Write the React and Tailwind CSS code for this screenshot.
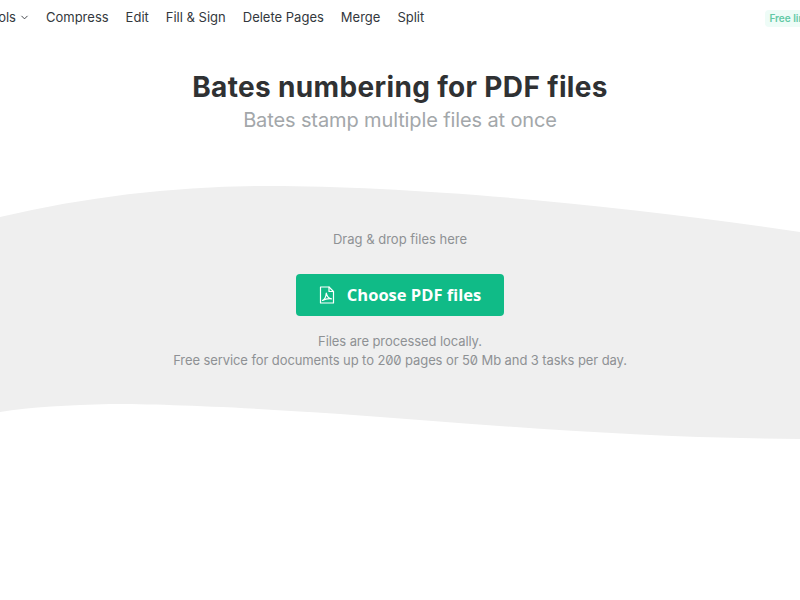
import React from 'react';
import { ChevronDown } from 'lucide-react';

const links = ['Compress', 'Edit', 'Fill & Sign', 'Delete Pages', 'Merge', 'Split'];

const Nav = () => (
  <nav className="flex h-[36px] items-center justify-between overflow-hidden">
    <div className="flex items-center text-[13px] text-[#33383d] -ml-[17px]">
      <span className="flex items-center">
        Tools
        <ChevronDown size={11} className="ml-[3px] -mt-[2px]" />
      </span>
      <div className="ml-[16px] flex gap-[17px]">
        {links.map((link) => (
          <span key={link}>{link}</span>
        ))}
      </div>
    </div>
    <span className="-mr-[23px] rounded bg-[#eefcf7] px-[4px] py-[1px] text-[10px] font-semibold whitespace-nowrap text-[#62c9a5]">
      Free limits
    </span>
  </nav>
);

const PdfIcon = () => (
  <svg width="16" height="18" viewBox="0 0 16 18" fill="none" stroke="currentColor" strokeWidth="1.2" strokeLinejoin="round" strokeLinecap="round">
    <path d="M1.500 1h8.500l4.500 4.500V17H1.500z" />
    <path d="M10 1v4.500h4.500" />
    <path d="M3.500 14.500c2-1 3.500-4 3.800-7.500 .6 3 2.500 5.500 5.200 5.800-3.200-.3-6.500.3-9 1.700z" />
  </svg>
);

const Wave = () => (
  <svg className="absolute left-0 top-0 -z-10" width="800" height="260" viewBox="0 0 800 260" preserveAspectRatio="none">
    <path
      d="M0 31 C90 10 180 0 270 0 C400 0 600 16 800 46 V253 C640 252 500 240 340 228 C240 221 160 218 110 218 C70 219 30 221 0 226 Z"
      fill="#efefef"
    />
  </svg>
);

export default function App() {
  return (
    <div className="relative isolate h-[600px] w-[800px] overflow-hidden bg-white font-['Inter',sans-serif] [font-feature-settings:'zero']">
      <Nav />
      <div className="flex flex-col items-center">
        <h1 className="mt-[32px] text-[28px] leading-[38px] font-bold tracking-[0.35px] text-[#2f3133]">Bates numbering for PDF files</h1>
        <p className="text-[20px] leading-[28px] tracking-[-0.12px] text-[#a3a7aa]">Bates stamp multiple files at once</p>
      </div>
      <section className="relative mt-[52px] flex h-[270px] flex-col items-center">
        <Wave />
        <p className="mt-[44px] text-[13px] leading-[18px] text-[#8e9194]">Drag &amp; drop files here</p>
        <button className="mt-[26px] flex h-[42px] w-[208px] items-center justify-center gap-[12px] rounded bg-[#10bb87] font-['Open_Sans',sans-serif] text-[16.500px] font-bold text-white">
          <PdfIcon />
          Choose PDF files
        </button>
        <p className="mt-[16px] text-[13px] leading-[19px] tracking-[-0.09px] text-[#8e9194]">Files are processed locally.</p>
        <p className="text-[13px] leading-[19px] tracking-[-0.09px] text-[#8e9194]">Free service for documents up to 200 pages or 50 Mb and 3 tasks per day.</p>
      </section>
    </div>
  );
}
